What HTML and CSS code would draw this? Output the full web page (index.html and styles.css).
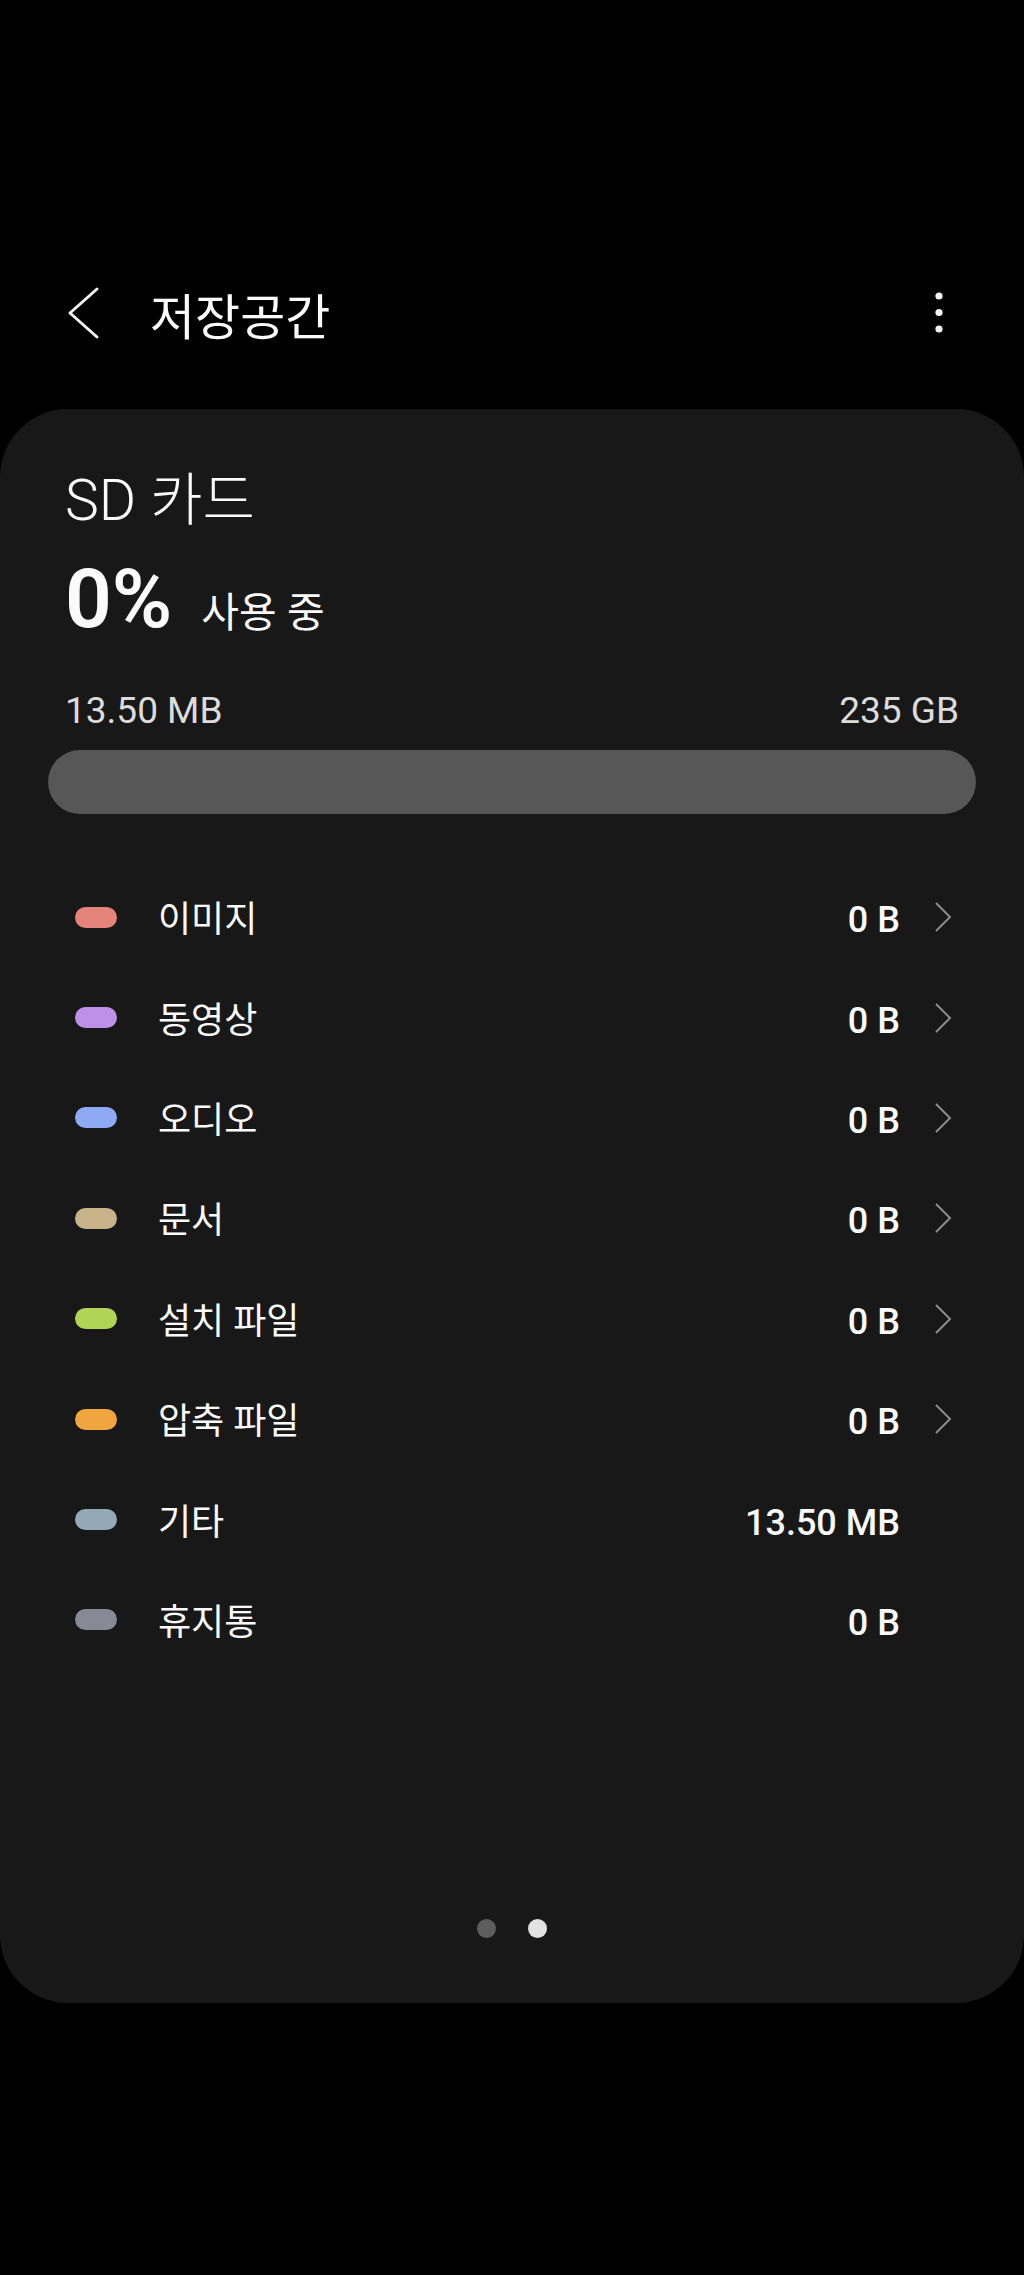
FILE: index.html
```html
<!DOCTYPE html>
<html lang="ko">
<head>
    <meta charset="UTF-8" />
    <meta name="viewport" content="width=device-width, initial-scale=1.0"/>
    <title>저장공간</title>
    <link rel="stylesheet" href="styles.css">
</head>
<body>

<header class="appbar">
    <button class="back-btn" aria-label="뒤로">
        <svg width="40" height="56" viewBox="0 0 40 56">
            <path d="M35 4 L8 28 L35 52" fill="none" stroke="#f2f2f2" stroke-width="3" stroke-linecap="round" stroke-linejoin="round"/>
        </svg>
    </button>
    <h1 class="title">저장공간</h1>
    <button class="more-btn" aria-label="더보기">
        <svg width="20" height="52" viewBox="0 0 20 52">
            <circle cx="10" cy="9" r="3.6" fill="#f2f2f2"/>
            <circle cx="10" cy="25.5" r="3.6" fill="#f2f2f2"/>
            <circle cx="10" cy="42" r="3.6" fill="#f2f2f2"/>
        </svg>
    </button>
</header>

<main class="card">
    <div class="device-name">SD 카드</div>
    <div class="usage">
        <span class="usage-pct">0%</span>
        <span class="usage-label">사용 중</span>
    </div>

    <div class="size-row">
        <span>13.50 MB</span>
        <span>235 GB</span>
    </div>
    <div class="bar"></div>

    <ul class="categories">
        <li class="cat">
            <span class="pill pill-image"></span>
            <span class="cat-name">이미지</span>
            <span class="cat-size">0 B</span>
            <span class="cat-arrow"><svg width="59" height="32" viewBox="0 0 59 32"><path d="M36 2 L50 16 L36 30" fill="none" stroke="#8c8c8c" stroke-width="2"/></svg></span>
        </li>
        <li class="cat">
            <span class="pill pill-video"></span>
            <span class="cat-name">동영상</span>
            <span class="cat-size">0 B</span>
            <span class="cat-arrow"><svg width="59" height="32" viewBox="0 0 59 32"><path d="M36 2 L50 16 L36 30" fill="none" stroke="#8c8c8c" stroke-width="2"/></svg></span>
        </li>
        <li class="cat">
            <span class="pill pill-audio"></span>
            <span class="cat-name">오디오</span>
            <span class="cat-size">0 B</span>
            <span class="cat-arrow"><svg width="59" height="32" viewBox="0 0 59 32"><path d="M36 2 L50 16 L36 30" fill="none" stroke="#8c8c8c" stroke-width="2"/></svg></span>
        </li>
        <li class="cat">
            <span class="pill pill-doc"></span>
            <span class="cat-name">문서</span>
            <span class="cat-size">0 B</span>
            <span class="cat-arrow"><svg width="59" height="32" viewBox="0 0 59 32"><path d="M36 2 L50 16 L36 30" fill="none" stroke="#8c8c8c" stroke-width="2"/></svg></span>
        </li>
        <li class="cat">
            <span class="pill pill-apk"></span>
            <span class="cat-name">설치 파일</span>
            <span class="cat-size">0 B</span>
            <span class="cat-arrow"><svg width="59" height="32" viewBox="0 0 59 32"><path d="M36 2 L50 16 L36 30" fill="none" stroke="#8c8c8c" stroke-width="2"/></svg></span>
        </li>
        <li class="cat">
            <span class="pill pill-zip"></span>
            <span class="cat-name">압축 파일</span>
            <span class="cat-size">0 B</span>
            <span class="cat-arrow"><svg width="59" height="32" viewBox="0 0 59 32"><path d="M36 2 L50 16 L36 30" fill="none" stroke="#8c8c8c" stroke-width="2"/></svg></span>
        </li>
        <li class="cat">
            <span class="pill pill-other"></span>
            <span class="cat-name">기타</span>
            <span class="cat-size">13.50 MB</span>
            <span class="cat-arrow"></span>
        </li>
        <li class="cat">
            <span class="pill pill-trash"></span>
            <span class="cat-name">휴지통</span>
            <span class="cat-size">0 B</span>
            <span class="cat-arrow"></span>
        </li>
    </ul>

    <div class="pager">
        <span class="dot"></span>
        <span class="dot active"></span>
    </div>
</main>

</body>
</html>
```

FILE: styles.css
```css
:root {
    --bg: #000000;
    --card: #181818;
    --text: #fafafa;
    --dim: #dcdcdc;
    --track: #575757;
}

* {
    box-sizing: border-box;
    margin: 0;
    padding: 0;
}

html, body {
    width: 100%;
    min-height: 100%;
    background: var(--bg);
    color: var(--text);
    font-family: Roboto, "Noto Sans CJK KR", sans-serif;
}

/* =========================
   APP BAR
========================= */
.appbar {
    display: flex;
    align-items: center;
    height: 112px;
    margin-top: 257px;
    padding: 0 75px 0 62px;
}

.back-btn,
.more-btn {
    background: none;
    border: none;
    display: flex;
    align-items: center;
    justify-content: center;
}

.title {
    flex: 1;
    margin: 12px 0 0 48px;
    font-size: 49px;
    font-weight: 400;
    line-height: 56px;
}

/* =========================
   CARD
========================= */
.card {
    margin-top: 40px;
    background: var(--card);
    border-radius: 68px;
    padding: 60px 65px 65px;
}

.device-name {
    font-size: 57px;
    font-weight: 300;
    line-height: 64px;
}

.usage {
    margin-top: 21px;
    line-height: 90px;
}

.usage-pct {
    font-size: 82px;
    font-weight: 600;
}

.usage-label {
    margin-left: 25px;
    font-size: 41px;
}

.size-row {
    display: flex;
    justify-content: space-between;
    margin-top: 22px;
    font-size: 37px;
    line-height: 44px;
    color: var(--dim);
}

.bar {
    height: 64px;
    margin: 17px -17px 0;
    border-radius: 32px;
    background: var(--track);
}

/* =========================
   CATEGORY LIST
========================= */
.categories {
    list-style: none;
    margin-top: 53px;
}

.cat {
    display: flex;
    align-items: center;
    height: 100.4px;
    padding-left: 10px;
}

.pill {
    width: 42px;
    height: 21px;
    border-radius: 11px;
    flex-shrink: 0;
}

.pill-image { background: #e5847a; }
.pill-video { background: #be90e8; }
.pill-audio { background: #8faaf5; }
.pill-doc   { background: #c8b28a; }
.pill-apk   { background: #b0d455; }
.pill-zip   { background: #f0a53e; }
.pill-other { background: #94a9b8; }
.pill-trash { background: #878996; }

.cat-name {
    margin-left: 41px;
    padding-top: 6px;
    font-size: 36px;
    line-height: 44px;
}

.cat-size {
    flex: 1;
    padding-top: 6px;
    text-align: right;
    font-size: 36px;
    font-weight: 500;
    line-height: 44px;
}

.cat-arrow {
    display: flex;
    width: 59px;
    height: 32px;
}

/* =========================
   PAGER
========================= */
.pager {
    display: flex;
    justify-content: center;
    gap: 32px;
    margin-top: 249px;
}

.dot {
    width: 19px;
    height: 19px;
    border-radius: 50%;
    background: #5e5e5e;
}

.dot.active { background: #e2e2e2; }
```
